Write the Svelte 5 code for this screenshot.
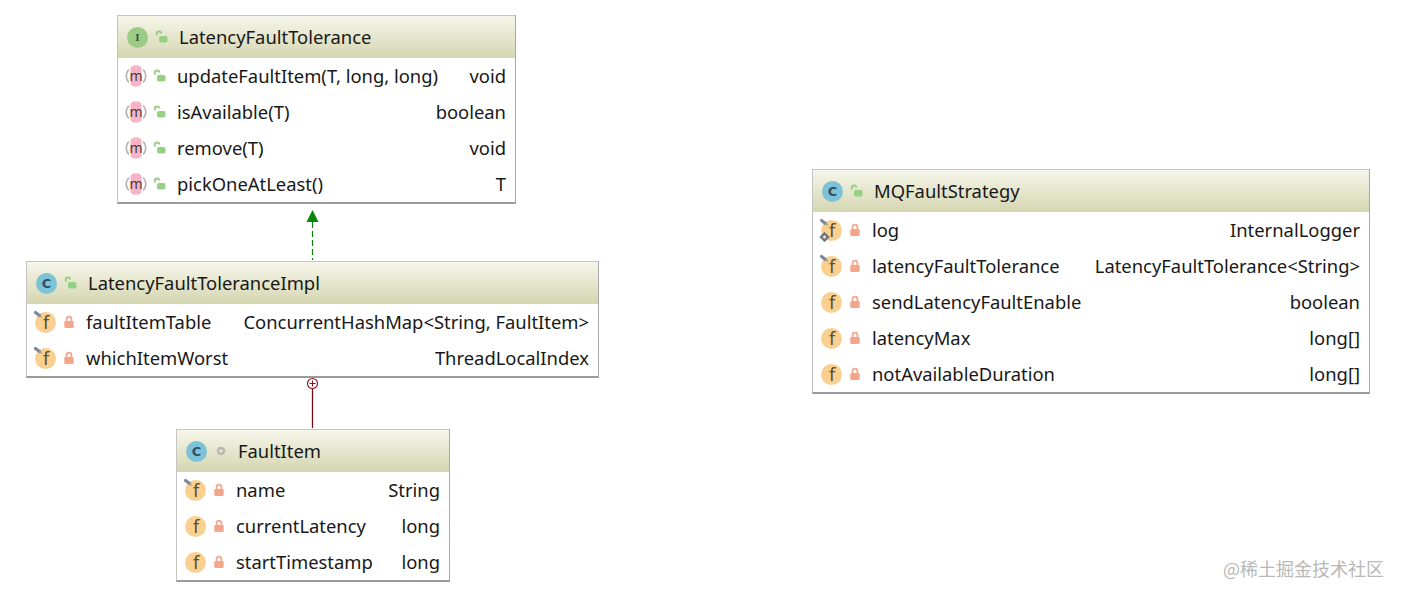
<script>
	// class diagram nodes, coordinates are the diagram's own canvas positions
	const nodes = [
		{
			kind: "I", vis: "open", title: "LatencyFaultTolerance",
			x: 117, y: 15, w: 399,
			rows: [
				{ icon: "m", vis: "open", name: "updateFaultItem(T, long, long)", type: "void" },
				{ icon: "m", vis: "open", name: "isAvailable(T)", type: "boolean" },
				{ icon: "m", vis: "open", name: "remove(T)", type: "void" },
				{ icon: "m", vis: "open", name: "pickOneAtLeast()", type: "T" }
			]
		},
		{
			kind: "C", vis: "open", title: "LatencyFaultToleranceImpl",
			x: 26, y: 261, w: 573,
			rows: [
				{ icon: "f", final: true, vis: "lock", name: "faultItemTable", type: "ConcurrentHashMap<String, FaultItem>" },
				{ icon: "f", final: true, vis: "lock", name: "whichItemWorst", type: "ThreadLocalIndex" }
			]
		},
		{
			kind: "C", vis: "pkg", title: "FaultItem",
			x: 176, y: 429, w: 274,
			rows: [
				{ icon: "f", final: true, vis: "lock", name: "name", type: "String" },
				{ icon: "f", vis: "lock", name: "currentLatency", type: "long" },
				{ icon: "f", vis: "lock", name: "startTimestamp", type: "long" }
			]
		},
		{
			kind: "C", vis: "open", title: "MQFaultStrategy",
			x: 812, y: 169, w: 558,
			rows: [
				{ icon: "f", final: true, isStatic: true, vis: "lock", name: "log", type: "InternalLogger" },
				{ icon: "f", final: true, vis: "lock", name: "latencyFaultTolerance", type: "LatencyFaultTolerance<String>" },
				{ icon: "f", vis: "lock", name: "sendLatencyFaultEnable", type: "boolean" },
				{ icon: "f", vis: "lock", name: "latencyMax", type: "long[]" },
				{ icon: "f", vis: "lock", name: "notAvailableDuration", type: "long[]" }
			]
		}
	];
</script>

{#snippet visIcon(vis)}
	<svg class="vis" viewBox="0 0 14 14" width="14" height="14">
		{#if vis === "open"}
			<path d="M1.800 5.500V3.600a2.200 2.200 0 0 1 4.400 0" fill="none" stroke="#9ccb88" stroke-width="2" />
			<rect x="4" y="6" width="8.500" height="6.500" rx="2" fill="#96d083" />
		{:else if vis === "lock"}
			<path d="M4.600 6.500V4a2.400 2.400 0 0 1 4.800 0v2.500" fill="none" stroke="#f2a88e" stroke-width="1.800" />
			<rect x="2.300" y="6" width="9.400" height="7" rx="1.300" fill="#f3a68a" />
		{:else}
			<circle cx="7" cy="7" r="3" fill="none" stroke="#b8b8b2" stroke-width="2.400" />
		{/if}
	</svg>
{/snippet}

{#snippet memberIcon(row)}
	<svg class="icon" viewBox="0 0 24 24" width="24" height="24">
		{#if row.icon === "m"}
			<rect x="6.500" y="1.500" width="11" height="21" rx="4" fill="#f9b3c6" />
			<path d="M4.800 5.500a9.500 9.500 0 0 0 0 13M19.200 5.500a9.500 9.500 0 0 1 0 13" fill="none" stroke="#bdb3b5" stroke-width="1.800" />
			<text class="glyph" x="12" y="16.500" text-anchor="middle">m</text>
		{:else}
			<circle cx="12.500" cy="12.500" r="10.500" fill="#f9d08f" />
			<text class="glyph ef" x="13" y="18.500" text-anchor="middle">f</text>
			{#if row.final}
				<path d="M2.500 2.500 6.500 5.500" stroke="#7d8894" stroke-width="3.200" stroke-linecap="round" />
				<path d="M6.500 5.500 9 7.500" stroke="#a9a49a" stroke-width="1.400" />
			{/if}
			{#if row.isStatic}
				<path d="M5.500 15.500 9 19 5.500 22.500 2 19Z" fill="#e9e4d8" stroke="#6d7680" stroke-width="2.400" />
			{/if}
		{/if}
	</svg>
{/snippet}

<main class="canvas">
	<svg class="edges" width="1402" height="598" viewBox="0 0 1402 598">
		<path d="M312.500 222V260" stroke="#0c800c" stroke-width="1.200" stroke-dasharray="6 3" />
		<path d="M306.500 222H318.500L312.500 210Z" fill="#0a860a" />
		<circle cx="312.500" cy="383.500" r="5" fill="#fff" stroke="#8c1020" stroke-width="1.100" />
		<path d="M312.500 380.500V386.500M309.500 383.500H315.500" stroke="#8c1020" stroke-width="1" />
		<path d="M312.500 389V428" stroke="#700c14" stroke-width="1.300" />
	</svg>

	{#each nodes as node}
		<section class="node" style="left:{node.x}px;top:{node.y}px;width:{node.w}px">
			<header>
				<span class="badge" class:iface={node.kind === "I"}>{node.kind}</span>
				{@render visIcon(node.vis)}
				<h2>{node.title}</h2>
			</header>
			{#each node.rows as row}
				<div class="row">
					{@render memberIcon(row)}
					{@render visIcon(row.vis)}
					<span class="name">{row.name}</span>
					<span class="type">{row.type}</span>
				</div>
			{/each}
		</section>
	{/each}

	<div class="mark">@稀土掘金技术社区</div>
</main>

<style>
	:global(body) {
		margin: 0;
		background: #fff;
	}

	.canvas {
		position: relative;
		width: 1402px;
		height: 598px;
		overflow: hidden;
		font-family: "Noto Sans", "Open Sans", sans-serif;
		font-size: 18.4px;
		color: #181818;
	}

	.edges {
		position: absolute;
		left: 0;
		top: 0;
	}

	.node {
		position: absolute;
		box-sizing: border-box;
		background: #fff;
		border: 1px solid #c4c4c4;
		border-bottom: 2px solid #9c9c9c;
		border-right-color: #a8a8a8;
	}

	header {
		display: flex;
		align-items: center;
		height: 42px;
		padding-left: 9px;
		background: linear-gradient(#f6f6ea, #d5d6b1);
	}

	.badge {
		display: flex;
		align-items: center;
		justify-content: center;
		flex: none;
		width: 21px;
		height: 21px;
		border-radius: 50%;
		background: #7cc3d8;
		color: #2f5068;
		font-family: "DejaVu Sans", sans-serif;
		font-size: 13px;
		font-weight: 700;
	}

	.badge.iface {
		background: #9ccb86;
		color: #33503a;
		font-family: "Liberation Serif", serif;
		font-size: 11px;
	}

	header .vis {
		margin-left: 7px;
	}

	h2 {
		margin: 0 0 2px 10px;
		font-size: 18.4px;
		font-weight: 400;
	}

	.row {
		display: flex;
		align-items: center;
		height: 36px;
		padding: 0 9px 0 6px;
	}

	.icon {
		flex: none;
	}

	.row .vis {
		margin-left: 5px;
		flex: none;
	}

	.name {
		margin: 0 0 2px 10px;
		white-space: nowrap;
	}

	.type {
		margin: 0 0 2px auto;
		white-space: nowrap;
	}

	.glyph {
		font-family: "Noto Sans", sans-serif;
		font-size: 14px;
		fill: #3c3c3c;
	}

	.glyph.ef {
		font-size: 18px;
		fill: #5a4c38;
	}

	.mark {
		position: absolute;
		right: 18px;
		top: 555px;
		font-family: "Noto Sans CJK SC", sans-serif;
		font-size: 18px;
		line-height: 26px;
		color: #b8b8b8;
	}
</style>
